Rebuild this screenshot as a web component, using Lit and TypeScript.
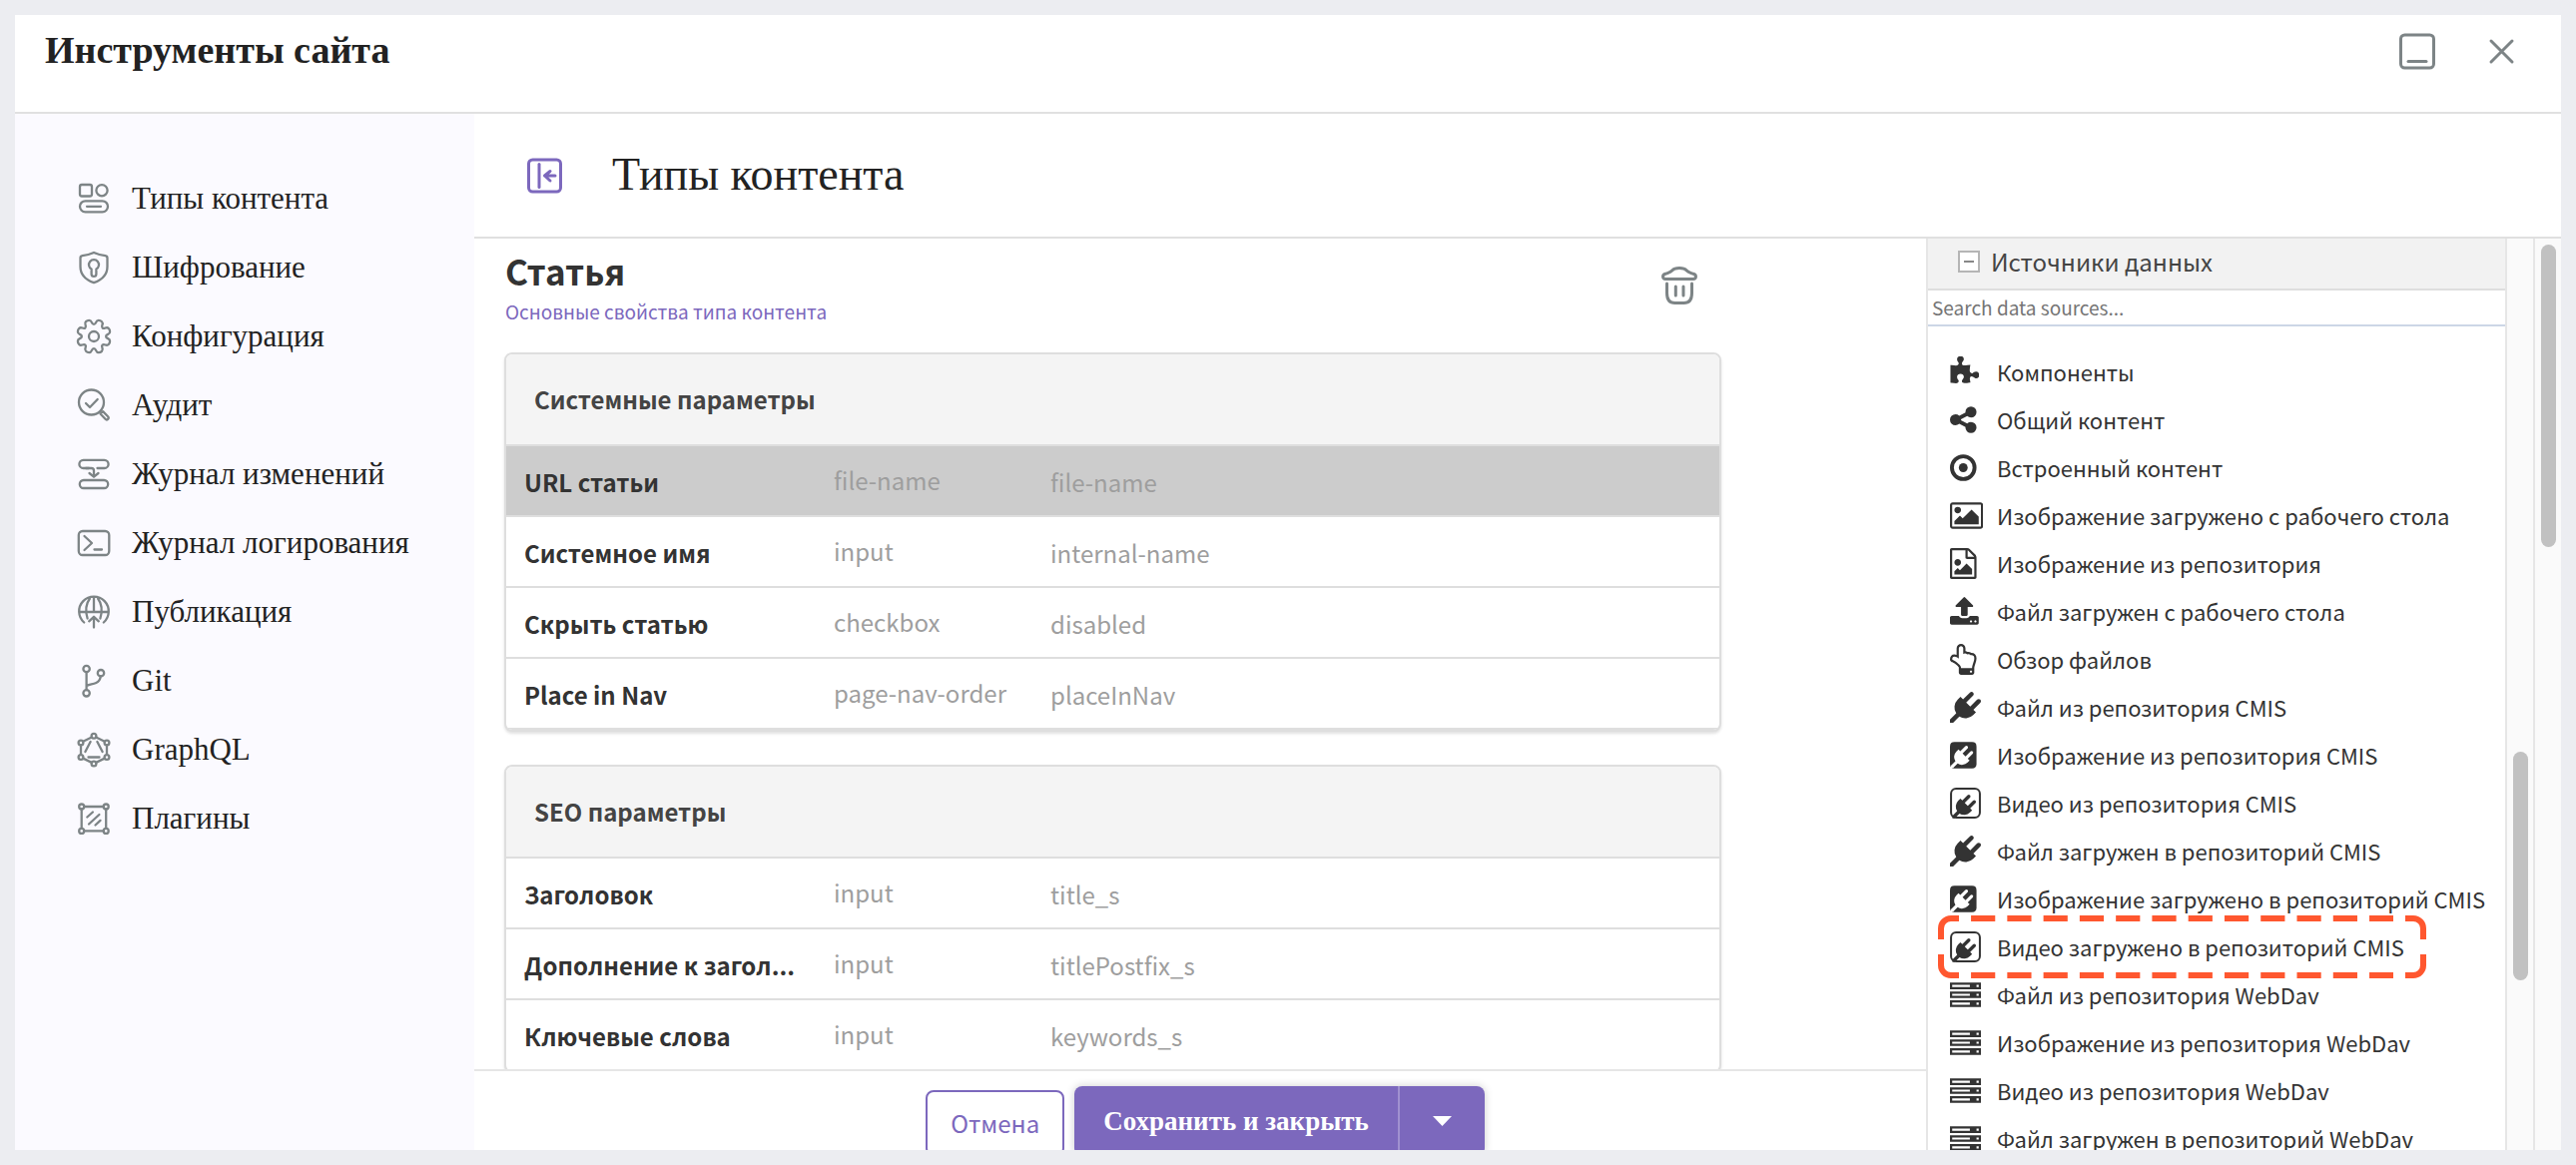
import { LitElement, html, svg, css } from 'lit';
import { customElement, property, state } from 'lit/decorators.js';
import { classMap } from 'lit/directives/class-map.js';

/* Eight-tooth gear outline, smoothed through the midpoints of its corners. */
function gearPath(cx: number, cy: number): string {
  const pts: Array<[number, number]> = [];
  const add = (deg: number, r: number) => {
    const a = (deg * Math.PI) / 180;
    pts.push([cx + r * Math.cos(a), cy + r * Math.sin(a)]);
  };
  for (let k = 0; k < 8; k++) {
    const tooth = 22.5 + 45 * k;
    add(tooth - 12, 16.4);
    add(tooth, 17.4);
    add(tooth + 12, 16.4);
    add(tooth + 16, 12.2);
    add(tooth + 29, 12.2);
  }
  const mid = (a: [number, number], b: [number, number]) =>
    `${((a[0] + b[0]) / 2).toFixed(2)} ${((a[1] + b[1]) / 2).toFixed(2)}`;
  let d = `M${mid(pts[pts.length - 1], pts[0])}`;
  pts.forEach((p, i) => {
    d += `Q${p[0].toFixed(2)} ${p[1].toFixed(2)} ${mid(p, pts[(i + 1) % pts.length])}`;
  });
  return d + 'z';
}

const lineIcons: Record<string, unknown> = {
  types: svg`<rect x="4" y="4" width="12" height="11.5" rx="2"/><circle cx="26" cy="9.7" r="5.6"/>
    <rect x="4" y="20.3" width="28" height="11" rx="5.5"/><path d="M11 25.8h14"/>`,
  shield: svg`<path d="M18 3c4.500 2 8.500 2.800 11.500 3.200 1.200.2 2 1 2 2.300V17c0 8-5 13.200-13.500 16.200C9.500 30.200 4.500 25 4.500 17V8.500c0-1.300.8-2.100 2-2.300C9.500 5.800 13.500 5 18 3z"/>
    <path d="M15.600 19.600a5 5 0 1 1 4.800 0v4.800a2.400 2.400 0 0 1-4.800 0z"/>`,
  gear: svg`<path d=${gearPath(18, 18)}/><circle cx="18" cy="18" r="5"/>`,
  audit: svg`<circle cx="15.500" cy="15" r="12.500"/><path d="M10 16l4 4 7.700-8"/>
    <path d="M24.500 26.500l2.600-2.400 5 5.200a1.800 1.800 0 0 1-2.600 2.500z"/>`,
  history: svg`<path d="M13 12H7.500a4 4 0 0 1 0-8.200h21a4 4 0 0 1 0 8.200H21.500"/>
    <path d="M10 12h5.500c1.600 0 2.500 1 2.500 2.500V20M13.500 17l4.500 3.700 4.500-3.700"/><rect x="3.800" y="24" width="28.400" height="8" rx="4"/>`,
  terminal: svg`<rect x="2.800" y="6" width="30.500" height="24" rx="4"/><path d="M8.500 11l7.500 7-7.500 7M18.500 24.500h7.500"/>`,
  publish: svg`<path d="M8.200 28.500a14.800 14.800 0 1 1 19.600 0M3.200 18h29.600M18 3v15M14 4.500C9.800 10 9.500 17.500 11.600 24.500M22 4.500c4.200 5.500 4.500 13 2.400 20"/>
    <path d="M18 33.500V23M13.200 27.300l4.800-4.500 4.800 4.500"/>`,
  git: svg`<circle cx="10.600" cy="6" r="3.200"/><circle cx="25" cy="10.200" r="3.200"/><circle cx="10.600" cy="30.300" r="3.200"/>
    <path d="M10.600 9.200v17.900M10.800 23c3-1.800 6-1.300 9.500-3 2.800-1.400 4.200-3.600 4.500-6.600"/>`,
  graphql: svg`<circle cx="18" cy="4.300" r="2.400"/><circle cx="31" cy="11" r="2.400"/><circle cx="31" cy="25.500" r="2.400"/>
    <circle cx="18" cy="32" r="2.400"/><circle cx="5" cy="25.500" r="2.400"/><circle cx="5" cy="11" r="2.400"/>
    <path d="M20.200 5.400l8.600 4.400M31 13.400v9.700M28.800 26.600l-8.600 4.300M15.800 30.900l-8.600-4.300M5 23.100v-9.700M7.200 9.800l8.600-4.400M14.600 10L9.400 20M21.400 10l5.200 10M12.500 25.500h11"/>`,
  plugins: svg`<circle cx="5.700" cy="6" r="2.500"/><circle cx="30.200" cy="6" r="2.500"/><circle cx="5.700" cy="30.400" r="2.500"/><circle cx="30.200" cy="30.400" r="2.500"/>
    <path d="M8.200 6h19.500M8.200 30.400h19.500M5.700 8.500v19.400M30.200 8.500v19.400M11.300 16.500l5.600-5M13 23.500l10.400-9.500M19.500 24.500l5-4.600"/>`,
};

const plugPath =
  'M1755 453q37 38 37 90.500t-37 90.500l-401 400 150 150-160 160q-163 163-389.500 186.500t-411.500-100.500l-362 362h-181v-181l362-362q-124-185-100.500-411.500t186.500-389.500l160-160 150 150 400-401q38-37 91-37t90 37 37 90.500-37 90.500l-400 401 234 234 401-400q38-37 91-37t90 37z';

/* Each solid icon: left edge and width of its glyph on the 1792 grid. */
const solidIcons: Record<string, { x: number; w: number; body: unknown }> = {
  puzzle: {
    x: 64, w: 1692,
    body: svg`<path d="M1755 1083q0 81-44.500 135t-123.500 54q-41 0-77.500-17.500t-59-38-56.500-38-71-17.500q-110 0-110 124 0 39 16 115t15 115v5q-22 0-33 1-34 3-97.500 11.500t-115.500 13.500-98 5q-61 0-103-26.500t-42-83.500q0-37 17.500-71t38-56.500 38-59 17.500-77.500q0-79-54-123.500t-135-44.500q-84 0-143 45.500t-59 127.500q0 43 15 83t33.500 64.500 33.500 53 15 50.500q0 45-46 89-37 35-117 35-95 0-245-24-9-2-27.500-4t-27.500-4l-13-2q-1 0-3-1-2 0-2-1v-1024q2 1 17.500 3.500t34 5 21.500 3.500q150 24 245 24 80 0 117-35 46-44 46-89 0-22-15-50.500t-33.500-53-33.500-64.500-15-83q0-82 59-127.500t144-45.500q80 0 134 44.500t54 123.500q0 41-17.500 77.500t-38 59-38 56.500-17.500 71q0 57 42 83.500t103 26.500q64 0 180-15t163-17v2q-1 2-3.500 17.500t-5 34-3.500 21.500q-24 150-24 245 0 80 35 117 44 46 89 46 22 0 50.500-15t53-33.500 64.500-33.500 83-15q82 0 127.500 59t45.500 143z"/>`,
  },
  share: {
    x: 128, w: 1536,
    body: svg`<path d="M1344 1024q133 0 226.500 93.500t93.500 226.500-93.500 226.500-226.500 93.500-226.500-93.500-93.500-226.500q0-12 2-34l-360-180q-92 86-218 86-133 0-226.500-93.500t-93.500-226.500 93.500-226.500 226.500-93.500q126 0 218 86l360-180q-2-22-2-34 0-133 93.500-226.500t226.500-93.500 226.500 93.500 93.500 226.500-93.500 226.500-226.500 93.500q-126 0-218-86l-360 180q2 22 2 34t-2 34l360 180q92-86 218-86z"/>`,
  },
  target: {
    x: 128, w: 1536,
    body: svg`<circle cx="896" cy="896" r="656" fill="none" stroke="currentColor" stroke-width="224"/><circle cx="896" cy="896" r="256"/>`,
  },
  image: {
    x: -64, w: 1920,
    body: svg`<path d="M576 576q0 80-56 136t-136 56-136-56-56-136 56-136 136-56 136 56 56 136zm1024 384v448h-1408v-192l320-320 160 160 512-512zm96-704h-1600q-13 0-22.500 9.500t-9.500 22.500v1216q0 13 9.500 22.500t22.500 9.500h1600q13 0 22.500-9.500t9.500-22.500v-1216q0-13-9.500-22.500t-22.500-9.500zm160 32v1216q0 66-47 113t-113 47h-1600q-66 0-113-47t-47-113v-1216q0-66 47-113t113-47h1600q66 0 113 47t47 113z"/>`,
  },
  fileImage: {
    x: 128, w: 1536,
    body: svg`<path d="M1596 380q28 28 48 76t20 88v1152q0 40-28 68t-68 28h-1344q-40 0-68-28t-28-68v-1600q0-40 28-68t68-28h896q40 0 88 20t76 48zm-444-244v376h376q-10-29-22-41l-313-313q-12-12-41-22zm384 1528v-1024h-416q-40 0-68-28t-28-68v-416h-768v1536h1280zm-128-448v320h-1024v-192l192-192 128 128 384-384zm-832-192q-80 0-136-56t-56-136 56-136 136-56 136 56 56 136-56 136-136 56z"/>`,
  },
  upload: {
    x: 64, w: 1664,
    body: svg`<path d="M1344 1472q0-26-19-45t-45-19-45 19-19 45 19 45 45 19 45-19 19-45zm256 0q0-26-19-45t-45-19-45 19-19 45 19 45 45 19 45-19 19-45zm128-224v320q0 40-28 68t-68 28h-1472q-40 0-68-28t-28-68v-320q0-40 28-68t68-28h427q21 56 70.500 92t110.500 36h256q61 0 110.500-36t70.500-92h427q40 0 68 28t28 68zm-325-648q-17 40-59 40h-256v448q0 26-19 45t-45 19h-256q-26 0-45-19t-19-45v-448h-256q-42 0-59-40-17-39 14-69l448-448q18-19 45-19t45 19l448 448q31 30 14 69z"/>`,
  },
  hand: {
    x: 128, w: 1536,
    body: svg`<path d="M1408 1600q0-26-19-45t-45-19-45 19-19 45 19 45 45 19 45-19 19-45zm128-764q0-189-167-189-26 0-56 5-16-30-52.500-47.500t-73.500-17.500-69 18q-50-53-119-53-25 0-55.500 10t-47.500 25v-331q0-52-38-90t-90-38q-51 0-89.500 39t-38.500 89v576q-20 0-48.500-15t-55-33-68-33-84.500-15q-67 0-97.500 44.500t-30.500 115.500q0 24 139 90 44 24 65 37 64 40 145 112 81 71 106 101 57 69 57 140v32h640v-32q0-72 32-167t64-193.500 32-179.500zm128-5q0 133-69 322-59 164-59 223v288q0 53-37.500 90.500t-90.500 37.500h-640q-53 0-90.500-37.500t-37.500-90.500v-288q0-10-4.500-21.500t-14-23.500-18-22.500-22.500-24-21.500-20.500-21.500-19-17-14q-74-65-129-100-21-13-62-33t-72-37-63-40.500-49.500-55-17.500-69.500q0-125 67-206.500t189-81.500q68 0 128 22v-374q0-104 77-180t179-76q105 0 181 75.500t76 180.500v169q62 4 119 37 21-3 43-3 101 0 178 60 139-1 219.500 85t80.500 227z"/>`,
  },
  plug: { x: 0, w: 1792, body: svg`<path d=${plugPath}/>` },
  plugSolidBox: {
    x: 128, w: 1536,
    body: svg`<path d="M384 128h1024q256 0 256 256v1024q0 256-256 256H384q-256 0-256-256V384q0-256 256-256z"/>
      <path class="knockout" transform="translate(182 350) scale(.72)" d=${plugPath}/>`,
  },
  plugBox: {
    x: 0, w: 1792,
    body: svg`<rect x="62" y="62" width="1668" height="1668" rx="290" fill="none" stroke="currentColor" stroke-width="116"/>
      <path transform="translate(140 410) scale(.76)" d=${plugPath}/>`,
  },
  server: {
    x: 0, w: 1792,
    body: svg`<path fill-rule="evenodd" d="M0 192h1792v384H0zM128 320v128h1024V320zM1536 320v128h128V320zM0 704h1792v384H0zM128 832v128h1024V832zM1536 832v128h128V832zM0 1216h1792v384H0zM128 1344v128h1024v-128zM1536 1344v128h128v-128z"/>`,
  },
};

interface Field { name: string; type: string; id: string; selected?: boolean; }
interface Section { title: string; fields: Field[]; }

const navItems: Array<[string, string]> = [
  ['types', 'Типы контента'],
  ['shield', 'Шифрование'],
  ['gear', 'Конфигурация'],
  ['audit', 'Аудит'],
  ['history', 'Журнал изменений'],
  ['terminal', 'Журнал логирования'],
  ['publish', 'Публикация'],
  ['git', 'Git'],
  ['graphql', 'GraphQL'],
  ['plugins', 'Плагины'],
];

const sections: Section[] = [
  {
    title: 'Системные параметры',
    fields: [
      { name: 'URL статьи', type: 'file-name', id: 'file-name', selected: true },
      { name: 'Системное имя', type: 'input', id: 'internal-name' },
      { name: 'Скрыть статью', type: 'checkbox', id: 'disabled' },
      { name: 'Place in Nav', type: 'page-nav-order', id: 'placeInNav' },
    ],
  },
  {
    title: 'SEO параметры',
    fields: [
      { name: 'Заголовок', type: 'input', id: 'title_s' },
      { name: 'Дополнение к загол...', type: 'input', id: 'titlePostfix_s' },
      { name: 'Ключевые слова', type: 'input', id: 'keywords_s' },
    ],
  },
];

const sources: Array<[string, string, boolean?]> = [
  ['puzzle', 'Компоненты'],
  ['share', 'Общий контент'],
  ['target', 'Встроенный контент'],
  ['image', 'Изображение загружено с рабочего стола'],
  ['fileImage', 'Изображение из репозитория'],
  ['upload', 'Файл загружен с рабочего стола'],
  ['hand', 'Обзор файлов'],
  ['plug', 'Файл из репозитория CMIS'],
  ['plugSolidBox', 'Изображение из репозитория CMIS'],
  ['plugBox', 'Видео из репозитория CMIS'],
  ['plug', 'Файл загружен в репозиторий CMIS'],
  ['plugSolidBox', 'Изображение загружено в репозиторий CMIS'],
  ['plugBox', 'Видео загружено в репозиторий CMIS', true],
  ['server', 'Файл из репозитория WebDav'],
  ['server', 'Изображение из репозитория WebDav'],
  ['server', 'Видео из репозитория WebDav'],
  ['server', 'Файл загружен в репозиторий WebDav'],
];

@customElement('tool-nav')
class ToolNav extends LitElement {
  static styles = css`
    :host { display: block; padding: 50px 0 0 61px; background: #fbfaff; }
    .list { list-style: none; margin: 0; padding: 0; }
    .link {
      display: flex; align-items: center; gap: 20px; height: 69px;
      color: #222; text-decoration: none; white-space: nowrap;
      font: 31px "Liberation Serif", "Times New Roman", serif;
    }
    .icon {
      width: 36px; height: 36px; fill: none; stroke: #7d8486; stroke-width: 2.3;
      stroke-linecap: round; stroke-linejoin: round;
    }
  `;
  render() {
    return html`<nav><ul class="list">
      ${navItems.map(([icon, label]) => html`<li><a class="link" href="#${icon}">
        <svg class="icon" viewBox="0 0 36 36" aria-hidden="true">${lineIcons[icon]}</svg>${label}</a></li>`)}
    </ul></nav>`;
  }
}

@customElement('field-card')
class FieldCard extends LitElement {
  @property({ attribute: false }) section!: Section;
  static styles = css`
    :host {
      display: block; overflow: hidden; border: 2px solid #dedede; border-radius: 8px;
      background: #fff; box-shadow: 0 2px 3px rgba(0, 0, 0, .12);
      font-family: "Noto Sans CJK SC", "Noto Sans", sans-serif; font-size: 24px;
    }
    .title {
      margin: 0; padding-left: 28px; background: #f4f4f4; border-bottom: 2px solid #dedede;
      font-size: 24px; line-height: 90px; font-weight: 700; color: #444;
    }
    .fields { width: 100%; table-layout: fixed; border-collapse: separate; border-spacing: 0; }
    .cell {
      height: 67px; box-sizing: content-box; padding: 2px 0 0; border-bottom: 2px solid #dedede;
      line-height: 36px; text-align: left; font-weight: 400; color: #9e9e9e;
    }
    .name {
      width: 278px; padding: 2px 32px 0 18px; font-weight: 700; color: #333;
      overflow: hidden; text-overflow: ellipsis; white-space: nowrap;
    }
    .type { width: 217px; padding: 0 0 2px; }
    .selected .cell { background: #ccc; }
  `;
  render() {
    return html`<h3 class="title">${this.section.title}</h3>
      <table class="fields" aria-label=${this.section.title}>
        ${this.section.fields.map((f) => html`<tr class=${classMap({ selected: !!f.selected })}>
          <th scope="row" class="cell name">${f.name}</th>
          <td class="cell type">${f.type}</td>
          <td class="cell">${f.id}</td>
        </tr>`)}
      </table>`;
  }
}

@customElement('source-panel')
class SourcePanel extends LitElement {
  @state() private open = true;
  static styles = css`
    :host {
      display: flex; flex-direction: column; min-height: 0; overflow: hidden;
      border: solid #e6e6e6; border-width: 0 2px; background: #fff; color: #333;
      font-family: "Noto Sans CJK SC", "Noto Sans", sans-serif;
    }
    .head {
      flex: none; display: flex; align-items: center; gap: 11px; height: 46px; padding: 0 30px 4px;
      border: 0; border-bottom: 2px solid #dedede; background: #f2f2f2; box-sizing: content-box;
      font: inherit; font-size: 24px; line-height: 36px; color: #444;
    }
    .toggle { width: 22px; height: 22px; }
    .search {
      flex: none; height: 36px; box-sizing: border-box; padding: 0 4px 2px; border: 0;
      border-bottom: 2px solid #ccd6e6; background: #fff; color: #444;
      font: inherit; font-size: 19px; outline: 0;
    }
    .search::placeholder { color: #757575; opacity: 1; }
    .list { list-style: none; margin: 0; padding: 21px 0 0; }
    .item { position: relative; }
    .source {
      display: grid; grid-template-columns: 47px auto; justify-content: start; align-items: center;
      width: 100%; height: 48px; padding: 0 0 0 22px; border: 0; background: none;
      font: inherit; font-size: 22px; line-height: 48px; color: #333; text-align: left; white-space: nowrap;
    }
    .icon { display: block; height: 31px; fill: currentColor; color: #333; }
    .knockout { fill: #fff; }
    .marker { position: absolute; left: 10px; top: -7px; width: 489px; height: 63px; pointer-events: none; }
  `;
  render() {
    return html`
      <button class="head" aria-expanded=${this.open} @click=${() => (this.open = !this.open)}>
        <svg class="toggle" viewBox="0 0 22 22" aria-hidden="true">
          <rect x="1" y="1" width="20" height="20" fill="#fff" stroke="#b5b5b5" stroke-width="2"/>
          <path d="M6 11h10" stroke="#888" stroke-width="2"/>
        </svg>Источники данных</button>
      <input class="search" type="search" aria-label="Search data sources" placeholder="Search data sources...">
      ${this.open ? html`<ul class="list">
        ${sources.map(([icon, label, marked]) => {
          const g = solidIcons[icon];
          return html`<li class="item"><button class="source">
            <svg class="icon" viewBox="${g.x} 0 ${g.w} 1792" aria-hidden="true">${g.body}</svg>
            <span>${label}</span></button>
            ${marked ? html`<svg class="marker" viewBox="0 0 489 63" fill="none" stroke="#ff572f" stroke-width="6" aria-hidden="true">
              <path d="M3 24V13A10 10 0 0 1 13 3h8M468 3h8a10 10 0 0 1 10 10v11M486 39v11a10 10 0 0 1-10 10h-8M21 60h-8A10 10 0 0 1 3 50V39"/>
              <path stroke-dasharray="24.200 12.070" stroke-dashoffset="-12.070" d="M21 3h435"/>
              <path stroke-dasharray="24.200 12.070" stroke-dashoffset="-12.070" d="M21 60h435"/>
            </svg>` : ''}
          </li>`;
        })}
      </ul>` : ''}`;
  }
}

@customElement('app-root')
class AppRoot extends LitElement {
  static styles = css`
    :host {
      display: flex; flex-direction: column; height: 100vh; box-sizing: border-box;
      padding: 15px; background: #ecedf1;
      font-family: "Noto Sans CJK SC", "Noto Sans", sans-serif;
    }
    button { font: inherit; cursor: pointer; }
    .dialog { flex: 1; min-height: 0; display: flex; flex-direction: column; background: #fff; }
    .titlebar {
      display: flex; justify-content: space-between; align-items: flex-start; height: 97px;
      padding: 0 40px 0 30px; border-bottom: 2px solid #e0e0e0;
    }
    .title {
      margin: 0; padding-top: 13px; font: 700 38px/44px "Liberation Serif", "Times New Roman", serif; color: #222;
    }
    .window-buttons { display: flex; gap: 44px; padding-top: 16px; }
    .icon-button { display: flex; padding: 0; border: 0; background: none; color: #7d8486; }
    .line { fill: none; stroke: currentColor; stroke-width: 3; stroke-linecap: round; stroke-linejoin: round; }
    .s40 { width: 40px; height: 40px; }
    .body { flex: 1; min-height: 0; display: grid; grid-template-columns: 460px minmax(0, 1fr); }
    .page { display: flex; flex-direction: column; min-height: 0; }
    .toolbar {
      display: flex; align-items: center; gap: 47px; height: 123px; padding-left: 51px;
      border-bottom: 2px solid #e0e0e0;
    }
    .collapse { color: #7c68bd; }
    .page-title { margin: 0; padding-bottom: 2px; font: 400 46px/52px "Liberation Serif", "Times New Roman", serif; color: #222; }
    .work { flex: 1; min-height: 0; display: grid; grid-template-columns: minmax(0, 1fr) 582px 28px 26px; grid-template-rows: minmax(0, 1fr); }
    .main { display: flex; flex-direction: column; min-height: 0; overflow: hidden; }
    .canvas { flex: 1; min-height: 0; overflow: hidden; padding: 8px 205px 0 30px; }
    .type-head { display: flex; justify-content: space-between; align-items: flex-start; padding: 0 22px 0 1px; height: 106px; }
    .type-name { margin: 0; font-size: 35px; line-height: 48px; font-weight: 700; color: #333; }
    .type-link { display: block; font-size: 19px; line-height: 34px; color: #7c68bd; text-decoration: none; }
    .trash { padding-top: 19px; }
    .cards { display: grid; gap: 33px; }
    .footer {
      flex: none; display: flex; justify-content: center; align-items: flex-start;
      height: 79px; padding: 0 0 0 10px; overflow: hidden; border-top: 2px solid #e6e6e6; box-sizing: content-box;
    }
    .actions { display: flex; align-items: flex-end; gap: 10px; padding-top: 15px; }
    .cancel {
      height: 66px; box-sizing: border-box; padding: 0 23px 2px; border: 2px solid #7c68bd; border-radius: 8px;
      background: #fff; color: #7c68bd; font-size: 24px;
    }
    .split { display: flex; border-radius: 8px; box-shadow: 0 0 8px rgba(0, 0, 0, .2); }
    .save, .more { height: 70px; border: 0; background: #7c68bd; color: #fff; }
    .save {
      padding: 0 29px; border-radius: 8px 0 0 8px; border-right: 2px solid #a091d0;
      font: 700 27px "Liberation Serif", "Times New Roman", serif;
    }
    .more { display: flex; align-items: center; padding: 0 33px; border-radius: 0 8px 8px 0; }
    .caret { width: 19px; height: 10px; }
    .track { display: flex; flex-direction: column; align-items: center; background: #fafafa; }
    .track.inner { border-right: 2px solid #e6e6e6; }
    .thumb { width: 15px; border-radius: 8px; background: #c1c1c1; }
    .inner .before { flex: 514; }
    .inner .thumb { flex: 229; }
    .inner .after { flex: 170; }
    .outer .before { flex: 6; }
    .outer .thumb { flex: 303; }
    .outer .after { flex: 604; }
  `;
  render() {
    return html`<div class="dialog">
      <header class="titlebar">
        <h1 class="title">Инструменты сайта</h1>
        <div class="window-buttons">
          <button class="icon-button" aria-label="Свернуть">
            <svg class="line s40" viewBox="0 0 40 40"><rect x="3.500" y="4" width="33" height="33" rx="4"/><path d="M11 30.500h18"/></svg>
          </button>
          <button class="icon-button" aria-label="Закрыть">
            <svg class="line s40" viewBox="0 0 40 40"><path d="M10 10l21 21M31 10L10 31"/></svg>
          </button>
        </div>
      </header>
      <div class="body">
        <tool-nav></tool-nav>
        <section class="page">
          <div class="toolbar">
            <button class="icon-button collapse" aria-label="Скрыть меню">
              <svg class="line s40" viewBox="0 0 40 40"><rect x="3.500" y="4" width="32" height="32" rx="4"/>
                <path d="M14 8.500v23"/><path d="M30 20H19.500M25 15.500L19.500 20l5.500 5"/></svg>
            </button>
            <h2 class="page-title">Типы контента</h2>
          </div>
          <div class="work">
            <div class="main">
              <div class="canvas">
                <div class="type-head">
                  <div>
                    <h3 class="type-name">Статья</h3>
                    <a class="type-link" href="#properties">Основные свойства типа контента</a>
                  </div>
                  <button class="icon-button trash" aria-label="Удалить">
                    <svg class="line s40" viewBox="0 0 40 40">
                      <path d="M6 13.500h28c3 0 3.300-4 .6-5-4-1.500-5.600-1.400-7.600-3.700C25.500 3 24 2.500 20 2.500s-5.500.5-7 2.300c-2 2.300-3.600 2.200-7.600 3.700-2.700 1-2.400 5 .6 5z"/>
                      <path d="M7.500 18v9.500c0 6.500 3 10 8 10h9c5 0 8-3.500 8-10V18M16.300 21v9M24 21v9"/></svg>
                  </button>
                </div>
                <div class="cards">
                  ${sections.map((s) => html`<field-card .section=${s}></field-card>`)}
                </div>
              </div>
              <footer class="footer">
                <div class="actions">
                  <button class="cancel">Отмена</button>
                  <div class="split">
                    <button class="save">Сохранить и закрыть</button>
                    <button class="more" aria-label="Другие действия">
                      <svg class="caret" viewBox="0 0 19 10" aria-hidden="true"><path d="M0 0h19L9.500 10z" fill="#fff"/></svg>
                    </button>
                  </div>
                </div>
              </footer>
            </div>
            <source-panel></source-panel>
            <div class="track inner"><div class="before"></div><div class="thumb"></div><div class="after"></div></div>
            <div class="track outer"><div class="before"></div><div class="thumb"></div><div class="after"></div></div>
          </div>
        </section>
      </div>
    </div>`;
  }
}
